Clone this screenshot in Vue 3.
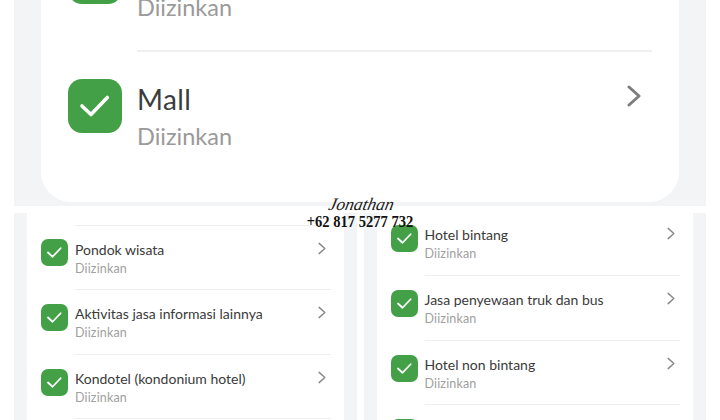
<template>
  <div class="page">
    <section class="top">
      <div class="card">
        <div class="big-row">
          <div class="big-icon">
            <svg viewBox="0 0 54 54" width="54" height="54"><path d="M14 27l9 8.500L39.300 18.500" /></svg>
          </div>
          <div class="big-body">
            <div class="big-text">
              <div class="big-title">Kantor</div>
              <div class="big-sub">Diizinkan</div>
            </div>
          </div>
        </div>
        <div class="big-row">
          <div class="big-icon">
            <svg viewBox="0 0 54 54" width="54" height="54"><path d="M14 27l9 8.500L39.300 18.500" /></svg>
          </div>
          <div class="big-body last">
            <div class="big-text">
              <div class="big-title">Mall</div>
              <div class="big-sub">Diizinkan</div>
            </div>
            <svg class="big-chevron" viewBox="0 0 14 22" width="14" height="22"><path d="M2 2l10 9-10 9" /></svg>
          </div>
        </div>
      </div>
    </section>

    <section class="columns">
      <div v-for="(col, i) in columns" :key="i" class="column">
        <div class="list" :class="col.cls">
          <div v-for="item in col.items" :key="item" class="row">
            <div class="icon">
              <svg viewBox="0 0 54 54" width="27" height="27"><path d="M14 27l9 8.500L39.300 18.500" /></svg>
            </div>
            <div class="body">
              <div class="text">
                <div class="title">{{ item }}</div>
                <div class="sub">Diizinkan</div>
              </div>
              <svg class="chevron" viewBox="0 0 14 22" width="8" height="13"><path d="M2 2l10 9-10 9" /></svg>
            </div>
          </div>
        </div>
      </div>
    </section>

    <div class="mark">
      <div class="mark-name">Jonathan</div>
      <div class="mark-phone">+62 817 5277 732</div>
    </div>
  </div>
</template>

<script setup>
const columns = [
  {
    cls: 'left',
    items: ['Pondok wisata', 'Aktivitas jasa informasi lainnya', 'Kondotel (kondonium hotel)'],
  },
  {
    cls: 'right',
    items: ['Hotel bintang', 'Jasa penyewaan truk dan bus', 'Hotel non bintang', 'Losmen'],
  },
];
</script>

<style>
html,
body {
  background: #fff;
}
</style>

<style scoped>
.page {
  position: relative;
  width: 720px;
  height: 420px;
  overflow: hidden;
  background: #fff;
  font-family: Lato, "Open Sans", sans-serif;
}

.top {
  height: 206px;
  margin: 0 14px;
  padding: 0 27px 4px;
  box-sizing: border-box;
  background: #f2f4f5;
}

.card {
  height: 100%;
  display: flex;
  flex-direction: column;
  justify-content: flex-end;
  overflow: hidden;
  background: #fff;
  border-radius: 0 0 30px 30px;
}

.big-row {
  display: flex;
  flex-shrink: 0;
  padding-left: 27px;
}

.big-icon {
  width: 54px;
  height: 54px;
  margin-top: 27px;
  border-radius: 14px;
  background: #43a047;
  flex-shrink: 0;
}

.big-icon svg,
.icon svg {
  display: block;
}

.big-icon path,
.icon path {
  fill: none;
  stroke: #fff;
  stroke-width: 3.600;
  stroke-linecap: round;
  stroke-linejoin: round;
}

.big-body {
  flex: 1;
  height: 129px;
  box-sizing: border-box;
  margin: 0 27px 0 15px;
  display: flex;
  justify-content: space-between;
  border-bottom: 2px solid #efefef;
}

.big-body.last {
  height: 150px;
  border-bottom: 0;
}

.big-text {
  padding-top: 29px;
}

.big-title {
  height: 37px;
  line-height: 36px;
  font-size: 28px;
  letter-spacing: 0.400px;
  color: #3c3c3c;
}

.big-sub {
  height: 36px;
  line-height: 36px;
  font-size: 23.500px;
  color: #9a9a9a;
}

.big-chevron {
  margin: 33px 11px 0 0;
}

.big-chevron path,
.chevron path {
  fill: none;
  stroke: #7d7d7d;
  stroke-width: 3;
  stroke-linecap: round;
  stroke-linejoin: round;
}

.chevron path {
  stroke: #888888;
  stroke-width: 2.500;
}

.columns {
  display: flex;
  gap: 7px;
  margin: 7px 14px 0;
}

.column {
  flex: 1;
  height: 207px;
  padding: 0 13px;
  background: #f2f4f5;
}

.list {
  height: 100%;
  overflow: hidden;
  background: #fff;
}

.list.left {
  padding-top: 12px;
}

.list.left .row:first-child .body {
  border-top: 1px solid #eeeeee;
}

.list.right .row:first-child {
  margin-top: -2px;
}

.row {
  display: flex;
  padding-left: 14px;
}

.icon {
  width: 27px;
  height: 27px;
  margin-top: 14px;
  border-radius: 7px;
  background: #43a047;
  flex-shrink: 0;
}

.body {
  flex: 1;
  height: 64.800px;
  box-sizing: border-box;
  margin: 0 13px 0 7px;
  display: flex;
  justify-content: space-between;
  border-bottom: 1px solid #eeeeee;
}

.text {
  padding-top: 15px;
}

.title {
  height: 18px;
  line-height: 18px;
  font-size: 14px;
  color: #3a3a3a;
}

.sub {
  height: 18px;
  line-height: 20px;
  font-size: 12.500px;
  letter-spacing: 0.150px;
  color: #a0a0a0;
}

.chevron {
  margin: 16px 5px 0 0;
}

.mark {
  position: absolute;
  left: 300px;
  top: 194px;
  width: 120px;
  text-align: center;
  color: #111;
}

.mark-name {
  height: 20px;
  line-height: 20px;
  padding-left: 3px;
  font-family: "Liberation Serif", serif;
  font-style: italic;
  font-size: 17.500px;
  color: #222;
  transform: skewX(-12deg);
}

.mark-phone {
  line-height: 16px;
  font-family: "Liberation Serif", serif;
  font-weight: 700;
  font-size: 17px;
  white-space: nowrap;
  margin-left: -20px;
  margin-right: -20px;
  transform: scaleX(0.855);
}
</style>
